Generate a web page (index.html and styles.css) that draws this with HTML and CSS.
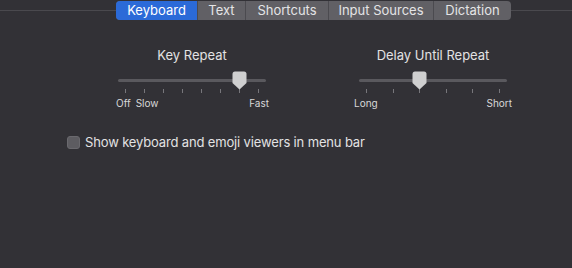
FILE: index.html
```html
<!DOCTYPE html>
<html lang="en">
<head>
  <meta charset="UTF-8" />
  <title>Keyboard</title>
  <link rel="stylesheet" href="styles.css">
</head>
<body>
  <div class="tabbar">
    <div class="tabs">
      <div class="tab active tab-keyboard">Keyboard</div>
      <div class="tab tab-text">Text</div>
      <div class="tab tab-shortcuts">Shortcuts</div>
      <div class="tab tab-input">Input Sources</div>
      <div class="tab tab-dictation">Dictation</div>
    </div>
  </div>

  <div class="sliders">
    <div class="slider">
      <div class="slider-title">Key Repeat</div>
      <div class="track">
        <svg class="thumb" style="left: 114px;" width="15" height="19" viewBox="0 0 15 19">
          <path d="M3 0.5 H12 Q14.5 0.5 14.5 3 V12 L7.5 18.5 L0.5 12 V3 Q0.5 0.5 3 0.5 Z" fill="#cfcfd0" />
        </svg>
      </div>
      <div class="ticks">
        <span></span><span></span><span></span><span></span>
        <span></span><span></span><span></span><span></span>
      </div>
      <div class="labels">
        <span class="lbl-off">Off</span>
        <span class="lbl-slow">Slow</span>
        <span class="lbl-right">Fast</span>
      </div>
    </div>

    <div class="slider">
      <div class="slider-title">Delay Until Repeat</div>
      <div class="track">
        <svg class="thumb" style="left: 53px;" width="15" height="19" viewBox="0 0 15 19">
          <path d="M3 0.5 H12 Q14.5 0.5 14.5 3 V12 L7.5 18.5 L0.5 12 V3 Q0.5 0.5 3 0.5 Z" fill="#cfcfd0" />
        </svg>
      </div>
      <div class="ticks">
        <span></span><span></span><span></span>
        <span></span><span></span><span></span>
      </div>
      <div class="labels wide">
        <span>Long</span>
        <span class="lbl-right">Short</span>
      </div>
    </div>
  </div>

  <label class="option">
    <span class="checkbox"></span>
    <span>Show keyboard and emoji viewers in menu bar</span>
  </label>
</body>
</html>
```

FILE: styles.css
```css
* {
  margin: 0;
  padding: 0;
  box-sizing: border-box;
}
body {
  font-family: Inter, "Liberation Sans", sans-serif;
  background-color: #323136;
  color: #dfdfe0;
  width: 572px;
  height: 268px;
  overflow: hidden;
}
.tabbar {
  padding-top: 1px;
  height: 21px;
  background: linear-gradient(#4a494e, #4a494e) 0 10px / 100% 1px no-repeat;
}
.tabs {
  display: flex;
  margin-left: 116px;
  width: 395px;
  height: 19px;
  border-radius: 4px;
  overflow: hidden;
  background-color: #616065;
}
.tab {
  font-size: 13px;
  line-height: 19px;
  text-align: center;
  color: #e4e4e5;
  border-left: 1px solid #4b4a4f;
}
.tab.active {
  background-color: #2b6ad8;
  color: #ffffff;
  border-left: none;
}
.tab-keyboard { width: 81px; }
.tab-text { width: 48px; }
.tab-shortcuts { width: 83px; }
.tab-input { width: 105px; }
.tab-dictation { width: 78px; }

.sliders {
  display: flex;
  gap: 81px;
  padding-left: 112px;
  margin-top: 26px;
}
.slider {
  width: 160px;
  display: flex;
  flex-direction: column;
  align-items: center;
}
.slider-title {
  font-size: 13px;
  line-height: 16px;
  color: #e2e2e3;
}
.track {
  position: relative;
  width: 148px;
  height: 3px;
  margin-top: 16px;
  border-radius: 2px;
  background-color: #5a595e;
}
.thumb {
  position: absolute;
  top: -8px;
}
.ticks {
  display: flex;
  justify-content: space-between;
  width: 148px;
  padding: 0 7px;
  margin-top: 7px;
}
.ticks span {
  width: 1px;
  height: 4px;
  background-color: #77767b;
}
.labels {
  display: flex;
  width: 154px;
  margin-top: 4px;
  font-size: 10px;
  line-height: 12px;
  color: #d8d8d9;
}
.labels.wide {
  width: 158px;
}
.lbl-off {
  margin-left: 1px;
}
.lbl-slow {
  margin-left: 5px;
}
.lbl-right {
  margin-left: auto;
}
.option {
  display: flex;
  align-items: center;
  gap: 5px;
  margin: 25px 0 0 67px;
  font-size: 13px;
  line-height: 16px;
  letter-spacing: -0.15px;
  color: #e2e2e3;
}
.checkbox {
  width: 13px;
  height: 13px;
  border-radius: 3px;
  background-color: #5d5c61;
  border: 1px solid #6a696e;
}
```
